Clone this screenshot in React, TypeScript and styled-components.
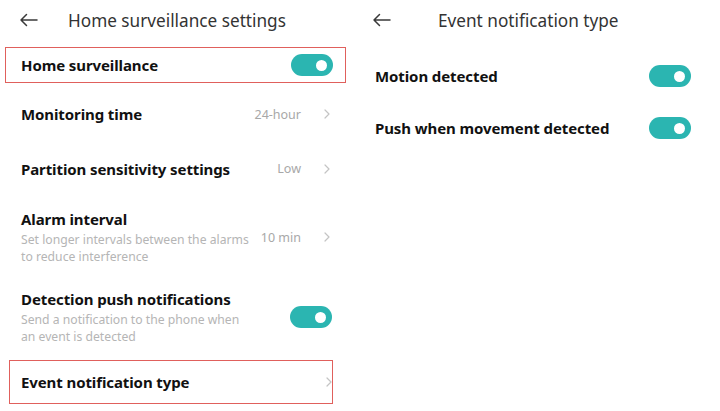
import styled, { createGlobalStyle } from "styled-components";

const GlobalStyle = createGlobalStyle`
  html, body {
    margin: 0;
    padding: 0;
    background: #ffffff;
  }
  body {
    font-family: "Noto Sans", "Open Sans", sans-serif;
    color: #111111;
  }
`;

const BackArrow = () => (
  <svg width="19" height="14" viewBox="0 0 19 14" fill="none">
    <path
      d="M18 7H2M7.5 1.5L2 7l5.5 5.5"
      stroke="#3a3a3a"
      strokeWidth="1.5"
      strokeLinecap="round"
      strokeLinejoin="round"
    />
  </svg>
);

const Chevron = () => (
  <svg width="6" height="10" viewBox="0 0 6 10" fill="none">
    <path
      d="M1 1l4 4-4 4"
      stroke="#c4c4c4"
      strokeWidth="1.2"
      strokeLinecap="round"
      strokeLinejoin="round"
    />
  </svg>
);

const App = () => {
  return (
    <>
      <GlobalStyle />
      <Screens>
        <Panel>
          <Header>
            <BackArrow />
            <Title>Home surveillance settings</Title>
          </Header>
          <Highlight $inset="7px 14px 0 5px" $height={36}>
            <Row $height={33} $left={15} $right={12}>
              <Label>Home surveillance</Label>
              <Toggle />
            </Row>
          </Highlight>
          <Row $height={52} $top={5}>
            <Label>Monitoring time</Label>
            <Trail>
              <Value>24-hour</Value>
              <Chevron />
            </Trail>
          </Row>
          <Row $height={57}>
            <Label>Partition sensitivity settings</Label>
            <Trail>
              <Value>Low</Value>
              <Chevron />
            </Trail>
          </Row>
          <Row $height={80}>
            <Texts>
              <Label>Alarm interval</Label>
              <Sub>
                Set longer intervals between the alarms
                <br />
                to reduce interference
              </Sub>
            </Texts>
            <Trail>
              <Value>10 min</Value>
              <Chevron />
            </Trail>
          </Row>
          <Row $height={80}>
            <Texts>
              <Label>Detection push notifications</Label>
              <Sub>
                Send a notification to the phone when
                <br />
                an event is detected
              </Sub>
            </Texts>
            <Toggle />
          </Row>
          <Highlight $inset="3px 27px 0 9px" $height={44}>
            <Row $height={41} $left={11} $right={0}>
              <Label>Event notification type</Label>
              <Chevron />
            </Row>
          </Highlight>
        </Panel>

        <Panel>
          <Header $pad={12}>
            <BackArrow />
            <Title $left={47}>Event notification type</Title>
          </Header>
          <PlainRow $top={14}>
            <Label>Motion detected</Label>
            <Toggle />
          </PlainRow>
          <PlainRow $top={8}>
            <Label>Push when movement detected</Label>
            <Toggle />
          </PlainRow>
        </Panel>
      </Screens>
    </>
  );
};

const Screens = styled.div`
  display: flex;
  width: 720px;
  height: 411px;
  overflow: hidden;
  background: #ffffff;
`;

const Panel = styled.section`
  width: 360px;
  display: flex;
  flex-direction: column;
`;

const Header = styled.header<{ $pad?: number }>`
  height: 40px;
  flex: none;
  display: flex;
  align-items: center;
  padding-left: ${(p) => p.$pad ?? 19}px;
`;

const Title = styled.h1<{ $left?: number }>`
  margin: 0 0 0 ${(p) => p.$left ?? 30}px;
  font-size: 17.2px;
  font-weight: 400;
  color: #333333;
`;

const Highlight = styled.div<{ $inset: string; $height: number }>`
  flex: none;
  margin: ${(p) => p.$inset};
  height: ${(p) => p.$height}px;
  border: 1.5px solid #e0605c;
  box-sizing: border-box;
  display: flex;
  align-items: center;
`;

const Row = styled.div<{
  $height: number;
  $top?: number;
  $left?: number;
  $right?: number;
}>`
  flex: none;
  width: 100%;
  height: ${(p) => p.$height}px;
  margin-top: ${(p) => p.$top ?? 0}px;
  display: flex;
  align-items: center;
  justify-content: space-between;
  padding: 0 ${(p) => p.$right ?? 28}px 0 ${(p) => p.$left ?? 21}px;
  box-sizing: border-box;
  gap: 10px;
`;

const PlainRow = styled.div<{ $top: number }>`
  height: 44px;
  margin-top: ${(p) => p.$top}px;
  display: flex;
  align-items: center;
  justify-content: space-between;
  padding: 0 29px 0 15px;
`;

const Texts = styled.div`
  display: flex;
  flex-direction: column;
  gap: 2px;
  min-width: 0;
`;

const Label = styled.span`
  font-size: 15px;
  font-weight: 700;
  color: #111111;
  letter-spacing: -0.1px;
  white-space: nowrap;
`;

const Sub = styled.span`
  font-size: 12.2px;
  line-height: 17.5px;
  color: #b5b5b5;
  white-space: nowrap;
`;

const Trail = styled.div`
  flex: none;
  display: flex;
  align-items: center;
  gap: 23px;
  padding-right: 2px;
`;

const Value = styled.span`
  font-size: 12.5px;
  color: #a8a8a8;
`;

const Toggle = styled.span`
  flex: none;
  width: 42px;
  height: 22px;
  border-radius: 11px;
  background: #2bb5b1;
  display: flex;
  align-items: center;
  justify-content: flex-end;
  padding-right: 6px;
  box-sizing: border-box;

  &::after {
    content: "";
    width: 11px;
    height: 11px;
    border-radius: 50%;
    background: #ffffff;
  }
`;

export default App;
